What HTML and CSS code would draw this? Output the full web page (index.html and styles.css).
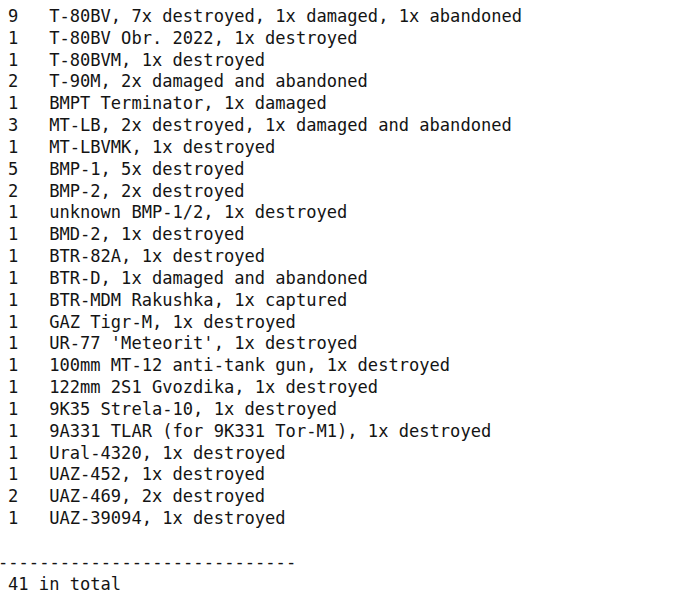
FILE: index.html
```html
<!DOCTYPE html>
<html>
<head>
<meta charset="utf-8">
<link rel="stylesheet" href="styles.css">
</head>
<body>
<div class="report">
  <div class="row"><span class="count">9</span><span class="desc">T-80BV, 7x destroyed, 1x damaged, 1x abandoned</span></div>
  <div class="row"><span class="count">1</span><span class="desc">T-80BV Obr. 2022, 1x destroyed</span></div>
  <div class="row"><span class="count">1</span><span class="desc">T-80BVM, 1x destroyed</span></div>
  <div class="row"><span class="count">2</span><span class="desc">T-90M, 2x damaged and abandoned</span></div>
  <div class="row"><span class="count">1</span><span class="desc">BMPT Terminator, 1x damaged</span></div>
  <div class="row"><span class="count">3</span><span class="desc">MT-LB, 2x destroyed, 1x damaged and abandoned</span></div>
  <div class="row"><span class="count">1</span><span class="desc">MT-LBVMK, 1x destroyed</span></div>
  <div class="row"><span class="count">5</span><span class="desc">BMP-1, 5x destroyed</span></div>
  <div class="row"><span class="count">2</span><span class="desc">BMP-2, 2x destroyed</span></div>
  <div class="row"><span class="count">1</span><span class="desc">unknown BMP-1/2, 1x destroyed</span></div>
  <div class="row"><span class="count">1</span><span class="desc">BMD-2, 1x destroyed</span></div>
  <div class="row"><span class="count">1</span><span class="desc">BTR-82A, 1x destroyed</span></div>
  <div class="row"><span class="count">1</span><span class="desc">BTR-D, 1x damaged and abandoned</span></div>
  <div class="row"><span class="count">1</span><span class="desc">BTR-MDM Rakushka, 1x captured</span></div>
  <div class="row"><span class="count">1</span><span class="desc">GAZ Tigr-M, 1x destroyed</span></div>
  <div class="row"><span class="count">1</span><span class="desc">UR-77 'Meteorit', 1x destroyed</span></div>
  <div class="row"><span class="count">1</span><span class="desc">100mm MT-12 anti-tank gun, 1x destroyed</span></div>
  <div class="row"><span class="count">1</span><span class="desc">122mm 2S1 Gvozdika, 1x destroyed</span></div>
  <div class="row"><span class="count">1</span><span class="desc">9K35 Strela-10, 1x destroyed</span></div>
  <div class="row"><span class="count">1</span><span class="desc">9A331 TLAR (for 9K331 Tor-M1), 1x destroyed</span></div>
  <div class="row"><span class="count">1</span><span class="desc">Ural-4320, 1x destroyed</span></div>
  <div class="row"><span class="count">1</span><span class="desc">UAZ-452, 1x destroyed</span></div>
  <div class="row"><span class="count">2</span><span class="desc">UAZ-469, 2x destroyed</span></div>
  <div class="row"><span class="count">1</span><span class="desc">UAZ-39094, 1x destroyed</span></div>
  <div class="row blank"></div>
  <div class="row rule">-----------------------------</div>
  <div class="row total">41 in total</div>
</div>
</body>
</html>
```

FILE: styles.css
```css
html, body {
  margin: 0;
  padding: 0;
  background: #ffffff;
}
body {
  padding: 6px 0 0 8px;
}
.report {
  font-family: "DejaVu Sans Mono", "Liberation Mono", monospace;
  font-size: 17.08px;
  line-height: 21.83px;
  color: #141414;
}
.row {
  display: flex;
  height: 21.83px;
  white-space: pre;
}
.count {
  width: 4ch;
  flex: none;
}
.rule {
  margin-left: -10px;
}
```
